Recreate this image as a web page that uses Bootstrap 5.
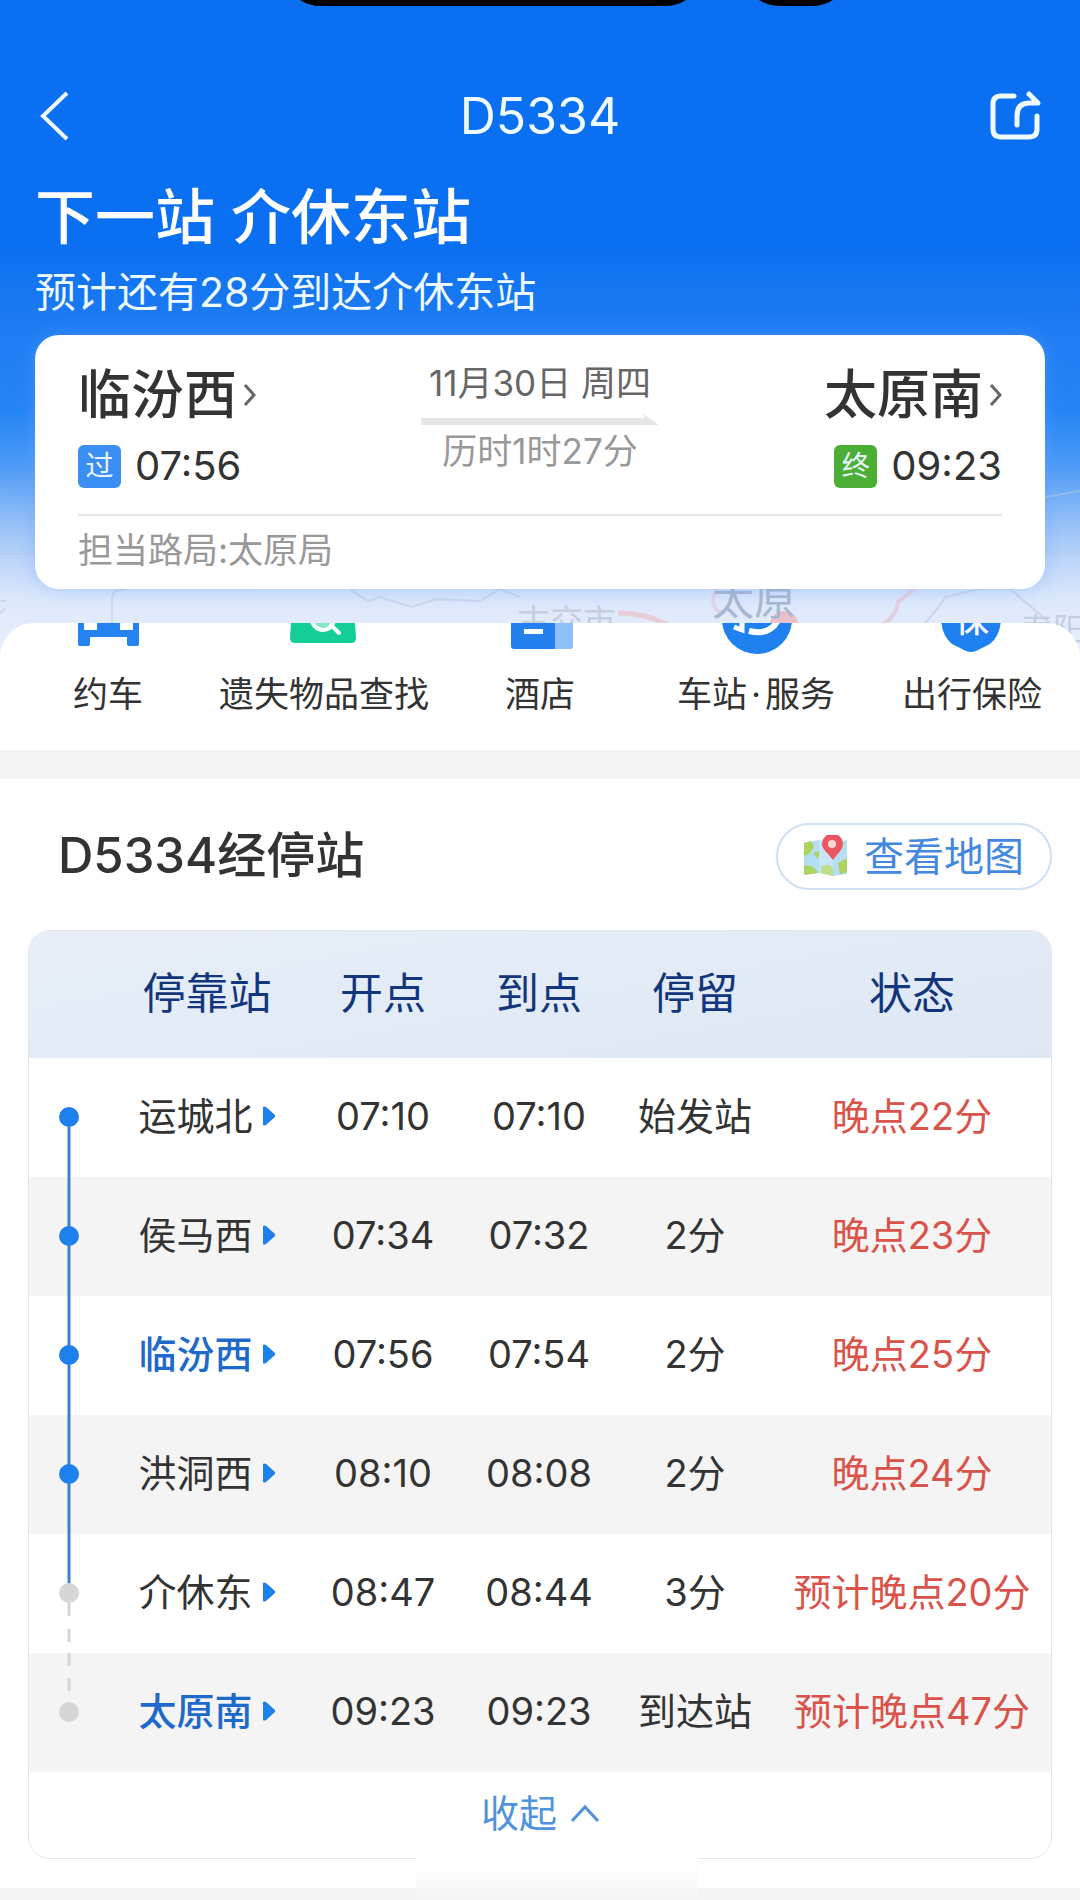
<!DOCTYPE html>
<html lang="zh-CN">
<head>
<meta charset="utf-8">
<meta name="viewport" content="width=device-width, initial-scale=1">
<title>D5334</title>
<link rel="stylesheet" href="https://cdn.jsdelivr.net/npm/bootstrap@5.3.0/dist/css/bootstrap.min.css">
<script src="https://cdn.jsdelivr.net/npm/bootstrap@5.3.0/dist/js/bootstrap.bundle.min.js"></script>
<style>
  body { font-family: Inter, "Noto Sans CJK SC", sans-serif; color: #333; background: #fff; }
  a, a:hover { color: inherit; text-decoration: none; }
  svg { display: block; flex: none; }

  /* Blue hero */
  .hero { background: linear-gradient(180deg, #0a6ff0 0, #0a6ff0 245px, #1d7bf2 320px, #2585f6 410px, #4c9af6 465px, #92bff7 520px, #bcd5f9 560px, #dde8fb 600px, #eaf0fc 657px); padding: 0 35px 68px; overflow: hidden; }
  .cutouts { top: 0; left: 0; }
  .topbar { padding-top: 71px; height: 161px; }
  .icon-btn { background: none; border: 0; padding: 0; color: #fff; width: 60px; }
  .train-no { font-size: 50px; line-height: 60px; font-weight: 400; color: #eefaff; }
  .next-stop { font-size: 60px; line-height: 72px; font-weight: 500; margin-top: 20px; }
  .eta { font-size: 41px; line-height: 50px; margin-top: 14px; color: #eefaff; }
  .map-strip { left: 0; bottom: 0; width: 100%; }
  .trip-card { background: #fff; border-radius: 24px; margin-top: 18px; padding: 28px 43px 17px; box-shadow: 0 0 20px rgba(110, 160, 255, .4); }
  .city { font-size: 53px; line-height: 64px; font-weight: 500; gap: 6px; }
  .clock { font-size: 40px; line-height: 44px; margin-top: 17px; padding-bottom: 1px; gap: 14px; }
  .tag { width: 43px; height: 43px; border-radius: 6px; font-size: 28px; line-height: 43px; text-align: center; color: #e9f5ff; }
  .tag-via { background: #3b8ef3; }
  .tag-end { background: #4bae35; }
  .info { font-size: 35px; line-height: 40px; }
  .arrow { margin: 10px 0 6px; }
  .bureau { border-top: 2px solid #e5e5e5; margin-top: 25px; padding-top: 12px; font-size: 35px; line-height: 44px; color: #999; }
  .grey6 { color: #666; }
  .grey9 { color: #999; }

  /* Services */
  .sheet { background: #fff; border-radius: 34px 34px 0 0; margin-top: -34px; overflow: hidden; }
  .service { font-size: 35px; line-height: 40px; gap: 15px; padding-bottom: 36px; white-space: nowrap; }
  .band { background: #f4f4f4; height: 29px; }
  .band-end { height: 12px; }

  /* Stops */
  .stops-head { padding: 44px 28px 40px 58px; }
  .stops-title { font-size: 49px; line-height: 60px; font-weight: 500; padding-bottom: 2px; }
  .map-btn { height: 67px; border: 2px solid #cfdff4; border-radius: 34px; background: #fff; color: #4489df; font-size: 40px; line-height: 60px; padding: 0 26px; gap: 16px; }
  .stops-card { margin: 0 28px 29px; border: 1px solid #e6e6e6; border-radius: 22px; overflow: hidden; }
  .stops { table-layout: fixed; width: 100%; text-align: center; white-space: nowrap; font-size: 38px; line-height: 46px; }
  .stops th, .stops td { padding: 0 0 4px; height: 119px; vertical-align: middle; }
  .stops td:first-child { padding: 0; }
  .stops thead tr { background: linear-gradient(170deg, #e7eef8, #dde8f4); }
  .stops thead th { height: 127px; font-size: 43px; font-weight: 400; color: #12357c; }
  .stops tbody tr:nth-child(even) { background: #f4f4f4; }
  .c-rail { width: 80px; }
  .c-name { width: 196px; }
  .c-time { width: 156px; }
  .stop-link { gap: 9px; }
  .own { color: #1e6acb; font-weight: 500; }
  .late { color: #d9534a; }
  .fold { height: 86px; background: none; border: 0; padding: 0 0 4px; color: #4f93dc; font-size: 38px; gap: 14px; }
  .home-haze { left: 416px; right: 382px; bottom: 0; height: 60px; background: linear-gradient(180deg, rgba(255,255,255,.6), #fdfdfd 50%, #f5f5f5); }
</style>
</head>
<body>
<div class="position-relative">
  <header class="hero position-relative">
    <svg class="cutouts position-absolute" width="1080" height="7" viewBox="0 0 1080 7" aria-hidden="true"><path d="M300 0Q309 6 322 6H664Q677 6 686 0ZM759 0Q769 6 780 6H812Q823 6 833 0Z" fill="#000"/></svg>
    <svg class="map-strip position-absolute" height="220" viewBox="0 0 1080 220" preserveAspectRatio="xMidYMax slice" aria-hidden="true">
      <g fill="none" stroke-width="2">
        <path d="M0 117H36M112 186V160Q112 153 126 152M350 153 368 164 380 160 412 170 436 162 480 164 500 152 520 160M0 164H6M0 176L5 171M1045 60 1080 54M1045 118 1080 115" stroke="#b9c8e2" opacity=".5"/>
        <path d="M925 186Q938 172 945 160L980 152H1010L1050 186" stroke="#cbd6ed"/>
        <path d="M618 176Q645 176 668 188" stroke="#e8ccd8" stroke-width="5"/>
        <path d="M882 188Q896 180 898 165L915 152" stroke="#e4cedd" stroke-width="4"/>
        <path d="M716 152Q708 170 722 176" stroke="#e0d6e8" stroke-width="4"/>
        <circle cx="784" cy="188" r="14" fill="#ebbfca"/>
      </g>
      <text x="712" y="178" font-size="42" fill="#a9b7d0">太原</text>
      <text x="517" y="196" font-size="33" fill="#c6cfdf">古交市</text>
      <text x="1020" y="205" font-size="33" fill="#c3cee0">寿阳</text>
    </svg>
    <nav class="topbar d-flex align-items-center justify-content-between">
      <button class="icon-btn" type="button" aria-label="返回"><svg width="40" height="52" viewBox="0 0 40 52" fill="none" stroke="#eefaff" stroke-width="4"><path d="M32 3 8 26 32 49"/></svg></button>
      <h1 class="train-no m-0">D5334</h1>
      <button class="icon-btn d-flex justify-content-end" type="button" aria-label="分享"><svg width="56" height="52" viewBox="0 0 56 52" fill="none" stroke="#eefaff" stroke-width="5" stroke-linecap="round" stroke-linejoin="round"><path d="M25 6H12Q4 6 4 14V39Q4 47 12 47H40Q48 47 48 39V26"/><path d="M28 35V26Q28 13 40 13H49L40 4"/></svg></button>
    </nav>
    <h2 class="next-stop text-white mb-0">下一站 介休东站</h2>
    <p class="eta mb-0">预计还有28分到达介休东站</p>

    <section class="trip-card position-relative">
      <div class="d-flex justify-content-between">
        <div>
          <a class="city d-flex align-items-center" href="#">临汾西<svg width="13" height="22" viewBox="0 0 13 22" fill="none" stroke="#666" stroke-width="3"><path d="M2 1 11 11 2 21"/></svg></a>
          <div class="clock d-flex align-items-center"><span class="tag tag-via">过</span>07:56</div>
        </div>
        <div class="info text-center d-flex flex-column align-items-center">
          <div class="grey6">11月30日 周四</div>
          <svg class="arrow" width="238" height="12" viewBox="0 0 238 12" aria-hidden="true"><path d="M0 5H224L221 0 238 12H0Z" fill="#e6e6e6"/></svg>
          <div class="grey9">历时1时27分</div>
        </div>
        <div>
          <a class="city d-flex align-items-center justify-content-end" href="#">太原南<svg width="13" height="22" viewBox="0 0 13 22" fill="none" stroke="#666" stroke-width="3"><path d="M2 1 11 11 2 21"/></svg></a>
          <div class="clock d-flex align-items-center justify-content-end"><span class="tag tag-end">终</span>09:23</div>
        </div>
      </div>
      <div class="bureau">担当路局:太原局</div>
    </section>
  </header>

  <main>
    <nav class="sheet position-relative">
      <div class="row row-cols-5 g-0">
        <a class="service col d-flex flex-column align-items-center" href="#"><svg width="72" height="36" viewBox="0 0 72 36"><path d="M6 0H12V7H25V0H48V7H61V0H67V21Q67 23 65 23H57Q55 23 55 21V14H18V21Q18 23 16 23H8Q6 23 6 21Z" fill="#2583f1"/></svg>约车</a>
        <a class="service col d-flex flex-column align-items-center" href="#"><svg width="72" height="36" viewBox="0 0 72 36"><path d="M3 0H67L68 15Q68 20 63 20H7Q2 20 2 15Z" fill="#14ce98"/><g stroke="#f2fffb" stroke-width="4" stroke-linecap="round"><circle cx="35" cy="-4" r="11" fill="#86e3c3"/><path d="M43 2 51 10"/></g></svg>遗失物品查找</a>
        <a class="service col d-flex flex-column align-items-center" href="#"><svg width="72" height="36" viewBox="0 0 72 36"><path d="M50 0H69V24Q69 26 67 26H50Z" fill="#8fc0f8"/><path d="M7 0H51V26H10Q7 26 7 23Z" fill="#2280ef"/><path d="M20 6H39V11H20Z" fill="#fff"/></svg>酒店</a>
        <a class="service col d-flex flex-column align-items-center" href="#"><svg width="72" height="36" viewBox="0 0 72 36"><circle cx="37" cy="-4" r="35" fill="#1f80ef"/><path d="M29 8Q50 13 58-3" fill="none" stroke="#fff" stroke-width="6"/><path d="M14 4 22 7 22-3" fill="none" stroke="#fff" stroke-width="5"/></svg><span>车站<span class="px-1">·</span>服务</span></a>
        <a class="service col d-flex flex-column align-items-center" href="#"><svg width="72" height="36" viewBox="0 0 72 36"><path d="M5-6H65Q65 12 54 21L40 28Q35 30 30 28L16 21Q5 12 5-6Z" fill="#1f80ef"/><text x="19" y="9" font-size="34" font-weight="500" fill="#fff">保</text></svg>出行保险</a>
      </div>
    </nav>
    <div class="band"></div>

    <section>
      <div class="stops-head d-flex align-items-center justify-content-between">
        <h2 class="stops-title m-0">D5334经停站</h2>
        <button class="map-btn d-flex align-items-center" type="button">
          <svg width="44" height="44" viewBox="0 0 44 44"><path d="M0 8 15 5 29 8 43 5V39L29 41 15 38 0 40Z" fill="#b5def2"/><path d="M0 8 7 6 10 12 5 19 0 21ZM0 31Q8 28 14 38L0 40ZM17 32Q24 27 29 33V41L17 38ZM9 18 16 16 14 24ZM34 28 43 23V37L36 39Z" fill="#acd35f"/><path d="M15 5 29 8V41L15 38Z" fill="#fff" opacity=".25"/><path d="M29 25C23 17 18 14 18 9A10 10 0 0 1 39 9C39 14 34 18 29 25Z" fill="#ec5561"/><circle cx="28" cy="9" r="4" fill="#fbd9cf"/></svg>查看地图</button>
      </div>

      <div class="stops-card">
        <table class="stops">
          <colgroup><col class="c-rail"><col class="c-name"><col class="c-time"><col class="c-time"><col class="c-time"><col></colgroup>
          <thead><tr><th aria-label="进度"></th><th scope="col">停靠站</th><th scope="col">开点</th><th scope="col">到点</th><th scope="col">停留</th><th scope="col">状态</th></tr></thead>
          <tbody>
            <tr><td><svg class="mx-auto" width="20" height="119"><path d="M10 59V119" stroke="#3f80cc" stroke-width="3"/><circle cx="10" cy="59" r="10" fill="#1e80ec"/></svg></td><td><a class="stop-link d-flex align-items-center justify-content-center" href="#">运城北<svg width="14" height="20" viewBox="0 0 14 20"><path d="M1 1Q2 0 4 1L13 9V11L4 19Q2 20 1 19Z" fill="#1e80ec"/></svg></a></td><td>07:10</td><td>07:10</td><td>始发站</td><td class="late">晚点22分</td></tr>
            <tr><td><svg class="mx-auto" width="20" height="119"><path d="M10 0V119" stroke="#3f80cc" stroke-width="3"/><circle cx="10" cy="59" r="10" fill="#1e80ec"/></svg></td><td><a class="stop-link d-flex align-items-center justify-content-center" href="#">侯马西<svg width="14" height="20" viewBox="0 0 14 20"><path d="M1 1Q2 0 4 1L13 9V11L4 19Q2 20 1 19Z" fill="#1e80ec"/></svg></a></td><td>07:34</td><td>07:32</td><td>2分</td><td class="late">晚点23分</td></tr>
            <tr><td><svg class="mx-auto" width="20" height="119"><path d="M10 0V119" stroke="#3f80cc" stroke-width="3"/><circle cx="10" cy="59" r="10" fill="#1e80ec"/></svg></td><td class="own"><a class="stop-link d-flex align-items-center justify-content-center" href="#">临汾西<svg width="14" height="20" viewBox="0 0 14 20"><path d="M1 1Q2 0 4 1L13 9V11L4 19Q2 20 1 19Z" fill="#1e80ec"/></svg></a></td><td>07:56</td><td>07:54</td><td>2分</td><td class="late">晚点25分</td></tr>
            <tr><td><svg class="mx-auto" width="20" height="119"><path d="M10 0V119" stroke="#3f80cc" stroke-width="3"/><circle cx="10" cy="59" r="10" fill="#1e80ec"/></svg></td><td><a class="stop-link d-flex align-items-center justify-content-center" href="#">洪洞西<svg width="14" height="20" viewBox="0 0 14 20"><path d="M1 1Q2 0 4 1L13 9V11L4 19Q2 20 1 19Z" fill="#1e80ec"/></svg></a></td><td>08:10</td><td>08:08</td><td>2分</td><td class="late">晚点24分</td></tr>
            <tr><td><svg class="mx-auto" width="20" height="119"><path d="M10 0V52" stroke="#3f80cc" stroke-width="3"/><path d="M10 60V82M10 95V108" stroke="#d6d6d6" stroke-width="3"/><circle cx="10" cy="59" r="10" fill="#d6d6d6"/></svg></td><td><a class="stop-link d-flex align-items-center justify-content-center" href="#">介休东<svg width="14" height="20" viewBox="0 0 14 20"><path d="M1 1Q2 0 4 1L13 9V11L4 19Q2 20 1 19Z" fill="#1e80ec"/></svg></a></td><td>08:47</td><td>08:44</td><td>3分</td><td class="late">预计晚点20分</td></tr>
            <tr><td><svg class="mx-auto" width="20" height="119"><path d="M10 0V13M10 25V38" stroke="#d6d6d6" stroke-width="3"/><circle cx="10" cy="59" r="10" fill="#d6d6d6"/></svg></td><td class="own"><a class="stop-link d-flex align-items-center justify-content-center" href="#">太原南<svg width="14" height="20" viewBox="0 0 14 20"><path d="M1 1Q2 0 4 1L13 9V11L4 19Q2 20 1 19Z" fill="#1e80ec"/></svg></a></td><td>09:23</td><td>09:23</td><td>到达站</td><td class="late">预计晚点47分</td></tr>
          </tbody>
        </table>
        <button class="fold d-flex align-items-center justify-content-center w-100" type="button">收起<svg width="28" height="18" viewBox="0 0 28 18" fill="none" stroke="#4f93dc" stroke-width="3"><path d="M1 17 14 3 27 17"/></svg></button>
      </div>
    </section>
    <div class="band band-end"></div>
  </main>
  <div class="home-haze position-absolute" aria-hidden="true"></div>
</div>
</body>
</html>
